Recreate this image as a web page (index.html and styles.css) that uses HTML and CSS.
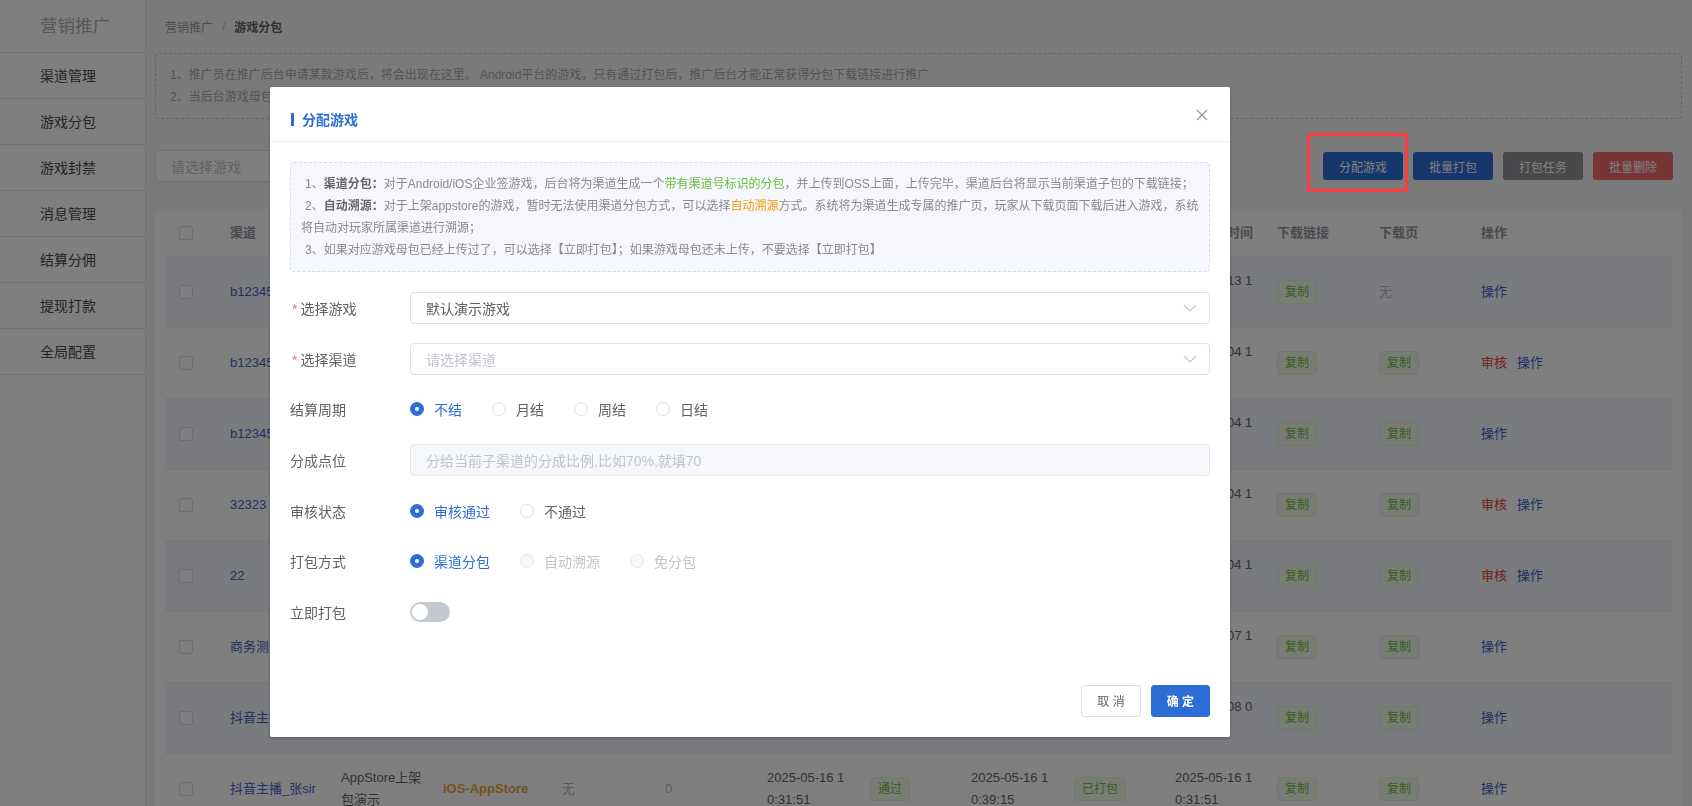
FILE: index.html
```html
<!DOCTYPE html>
<html lang="zh-CN">
<head>
    <meta charset="UTF-8">
    <meta name="viewport" content="width=device-width, initial-scale=1.0">
    <title>游戏分包 - 营销推广</title>
    <link rel="stylesheet" href="styles.css">
</head>
<body>
    <div class="layout">
        <!-- 左侧菜单 -->
        <aside class="sidebar">
            <div class="side-title">营销推广</div>
            <ul class="side-menu">
                <li>渠道管理</li>
                <li>游戏分包</li>
                <li>游戏封禁</li>
                <li>消息管理</li>
                <li>结算分佣</li>
                <li>提现打款</li>
                <li>全局配置</li>
            </ul>
        </aside>

        <main class="content">
            <div class="breadcrumb">
                <span class="crumb">营销推广</span>
                <span class="crumb-sep">/</span>
                <span class="crumb current">游戏分包</span>
            </div>

            <div class="notice">
                <p>1、推广员在推广后台申请某款游戏后，将会出现在这里。 Android平台的游戏，只有通过打包后，推广后台才能正常获得分包下载链接进行推广</p>
                <p>2、当后台游戏母包更新后，需要重新打包，渠道后台才能获取到最新的分包</p>
            </div>

            <div class="toolbar">
                <div class="select game-select">
                    <span class="placeholder">请选择游戏</span>
                </div>
                <div class="actions">
                    <button class="btn btn-primary btn-assign">分配游戏</button>
                    <button class="btn btn-primary">批量打包</button>
                    <button class="btn btn-info">打包任务</button>
                    <button class="btn btn-danger">批量删除</button>
                </div>
            </div>

            <div class="table-card">
                <div class="tr thead">
                    <div class="td td-check"><span class="checkbox"></span></div>
                    <div class="td">渠道</div>
                    <div class="td">游戏</div>
                    <div class="td">平台</div>
                    <div class="td">母包</div>
                    <div class="td">分成</div>
                    <div class="td">申请时间</div>
                    <div class="td">审核</div>
                    <div class="td">审核时间</div>
                    <div class="td">打包状态</div>
                    <div class="td">打包完成时间</div>
                    <div class="td">下载链接</div>
                    <div class="td">下载页</div>
                    <div class="td">操作</div>
                </div>

                <div class="tr striped">
                    <div class="td td-check"><span class="checkbox"></span></div>
                    <div class="td link">b123456</div>
                    <div class="td">默认演示游戏</div>
                    <div class="td platform">Android</div>
                    <div class="td muted">无</div>
                    <div class="td muted">0</div>
                    <div class="td">2025-05-13 14:02:11</div>
                    <div class="td"><span class="tag">通过</span></div>
                    <div class="td">2025-05-13 14:05:27</div>
                    <div class="td"><span class="tag">已打包</span></div>
                    <div class="td">2025-05-13 14:08:40</div>
                    <div class="td"><span class="tag">复制</span></div>
                    <div class="td muted">无</div>
                    <div class="td"><span class="op">操作</span></div>
                </div>

                <div class="tr">
                    <div class="td td-check"><span class="checkbox"></span></div>
                    <div class="td link">b123457</div>
                    <div class="td">默认演示游戏</div>
                    <div class="td platform">Android</div>
                    <div class="td muted">无</div>
                    <div class="td muted">0</div>
                    <div class="td">2025-05-04 11:20:05</div>
                    <div class="td"><span class="tag">通过</span></div>
                    <div class="td">2025-05-04 11:22:18</div>
                    <div class="td"><span class="tag">已打包</span></div>
                    <div class="td">2025-05-04 11:25:33</div>
                    <div class="td"><span class="tag">复制</span></div>
                    <div class="td"><span class="tag">复制</span></div>
                    <div class="td"><span class="audit">审核</span><span class="op">操作</span></div>
                </div>

                <div class="tr striped">
                    <div class="td td-check"><span class="checkbox"></span></div>
                    <div class="td link">b123458</div>
                    <div class="td">默认演示游戏</div>
                    <div class="td platform">Android</div>
                    <div class="td muted">无</div>
                    <div class="td muted">0</div>
                    <div class="td">2025-05-04 10:41:52</div>
                    <div class="td"><span class="tag">通过</span></div>
                    <div class="td">2025-05-04 10:45:09</div>
                    <div class="td"><span class="tag">已打包</span></div>
                    <div class="td">2025-05-04 10:47:16</div>
                    <div class="td"><span class="tag">复制</span></div>
                    <div class="td"><span class="tag">复制</span></div>
                    <div class="td"><span class="op">操作</span></div>
                </div>

                <div class="tr">
                    <div class="td td-check"><span class="checkbox"></span></div>
                    <div class="td link">32323</div>
                    <div class="td">默认演示游戏</div>
                    <div class="td platform">Android</div>
                    <div class="td muted">无</div>
                    <div class="td muted">0</div>
                    <div class="td">2025-05-04 10:12:30</div>
                    <div class="td"><span class="tag">通过</span></div>
                    <div class="td">2025-05-04 10:15:02</div>
                    <div class="td"><span class="tag">已打包</span></div>
                    <div class="td">2025-05-04 10:18:44</div>
                    <div class="td"><span class="tag">复制</span></div>
                    <div class="td"><span class="tag">复制</span></div>
                    <div class="td"><span class="audit">审核</span><span class="op">操作</span></div>
                </div>

                <div class="tr striped">
                    <div class="td td-check"><span class="checkbox"></span></div>
                    <div class="td link">22</div>
                    <div class="td">默认演示游戏</div>
                    <div class="td platform">Android</div>
                    <div class="td muted">无</div>
                    <div class="td muted">0</div>
                    <div class="td">2025-05-04 09:55:21</div>
                    <div class="td"><span class="tag">通过</span></div>
                    <div class="td">2025-05-04 09:58:10</div>
                    <div class="td"><span class="tag">已打包</span></div>
                    <div class="td">2025-05-04 10:01:37</div>
                    <div class="td"><span class="tag">复制</span></div>
                    <div class="td"><span class="tag">复制</span></div>
                    <div class="td"><span class="audit">审核</span><span class="op">操作</span></div>
                </div>

                <div class="tr">
                    <div class="td td-check"><span class="checkbox"></span></div>
                    <div class="td link">商务测试</div>
                    <div class="td">默认演示游戏</div>
                    <div class="td platform">Android</div>
                    <div class="td muted">无</div>
                    <div class="td muted">0</div>
                    <div class="td">2025-05-07 15:30:48</div>
                    <div class="td"><span class="tag">通过</span></div>
                    <div class="td">2025-05-07 15:33:12</div>
                    <div class="td"><span class="tag">已打包</span></div>
                    <div class="td">2025-05-07 15:36:59</div>
                    <div class="td"><span class="tag">复制</span></div>
                    <div class="td"><span class="tag">复制</span></div>
                    <div class="td"><span class="op">操作</span></div>
                </div>

                <div class="tr striped">
                    <div class="td td-check"><span class="checkbox"></span></div>
                    <div class="td link">抖音主播_李sir</div>
                    <div class="td">默认演示游戏</div>
                    <div class="td platform">Android</div>
                    <div class="td muted">无</div>
                    <div class="td muted">0</div>
                    <div class="td">2025-05-08 09:12:03</div>
                    <div class="td"><span class="tag">通过</span></div>
                    <div class="td">2025-05-08 09:15:26</div>
                    <div class="td"><span class="tag">已打包</span></div>
                    <div class="td">2025-05-08 09:18:41</div>
                    <div class="td"><span class="tag">复制</span></div>
                    <div class="td"><span class="tag">复制</span></div>
                    <div class="td"><span class="op">操作</span></div>
                </div>

                <div class="tr">
                    <div class="td td-check"><span class="checkbox"></span></div>
                    <div class="td link">抖音主播_张sir</div>
                    <div class="td">AppStore上架包演示</div>
                    <div class="td platform">iOS-AppStore</div>
                    <div class="td muted">无</div>
                    <div class="td muted">0</div>
                    <div class="td">2025-05-16 10:31:51</div>
                    <div class="td"><span class="tag">通过</span></div>
                    <div class="td">2025-05-16 10:39:15</div>
                    <div class="td"><span class="tag">已打包</span></div>
                    <div class="td">2025-05-16 10:31:51</div>
                    <div class="td"><span class="tag">复制</span></div>
                    <div class="td"><span class="tag">复制</span></div>
                    <div class="td"><span class="op">操作</span></div>
                </div>
            </div>
        </main>
    </div>

    <!-- 分配游戏弹窗 -->
    <div class="mask"></div>
    <div class="dialog-wrap">
        <div class="dialog">
            <div class="dialog-header">
                <span class="dialog-title">分配游戏</span>
                <span class="dialog-close">
                    <svg width="12" height="12" viewBox="0 0 12 12"><path d="M1 1L11 11M11 1L1 11" stroke="#909399" stroke-width="1.2" fill="none"/></svg>
                </span>
            </div>

            <div class="dialog-body">
                <div class="tips">
                    <p>1、<b>渠道分包：</b>对于Android/iOS企业签游戏，后台将为渠道生成一个<span class="green">带有渠道号标识的分包</span>，并上传到OSS上面，上传完毕，渠道后台将显示当前渠道子包的下载链接；</p>
                    <p>2、<b>自动溯源：</b>对于上架appstore的游戏，暂时无法使用渠道分包方式，可以选择<span class="orange">自动溯源</span>方式。系统将为渠道生成专属的推广页，玩家从下载页面下载后进入游戏，系统<br>将自动对玩家所属渠道进行溯源；</p>
                    <p>3、如果对应游戏母包已经上传过了，可以选择【立即打包】；如果游戏母包还未上传，不要选择【立即打包】</p>
                </div>

                <div class="form">
                    <div class="form-item">
                        <label class="form-label"><i class="req">*</i>选择游戏</label>
                        <div class="select">
                            <span class="value">默认演示游戏</span>
                            <svg class="arrow" width="14" height="8" viewBox="0 0 14 8"><path d="M1 1L7 7L13 1" stroke="#c0c4cc" stroke-width="1.2" fill="none"/></svg>
                        </div>
                    </div>

                    <div class="form-item">
                        <label class="form-label"><i class="req">*</i>选择渠道</label>
                        <div class="select">
                            <span class="placeholder">请选择渠道</span>
                            <svg class="arrow" width="14" height="8" viewBox="0 0 14 8"><path d="M1 1L7 7L13 1" stroke="#c0c4cc" stroke-width="1.2" fill="none"/></svg>
                        </div>
                    </div>

                    <div class="form-item">
                        <label class="form-label">结算周期</label>
                        <div class="radio-group">
                            <span class="radio checked"><i class="dot"></i>不结</span>
                            <span class="radio"><i class="dot"></i>月结</span>
                            <span class="radio"><i class="dot"></i>周结</span>
                            <span class="radio"><i class="dot"></i>日结</span>
                        </div>
                    </div>

                    <div class="form-item">
                        <label class="form-label">分成点位</label>
                        <div class="input disabled">
                            <span class="placeholder">分给当前子渠道的分成比例,比如70%,就填70</span>
                        </div>
                    </div>

                    <div class="form-item">
                        <label class="form-label">审核状态</label>
                        <div class="radio-group">
                            <span class="radio checked"><i class="dot"></i>审核通过</span>
                            <span class="radio"><i class="dot"></i>不通过</span>
                        </div>
                    </div>

                    <div class="form-item">
                        <label class="form-label">打包方式</label>
                        <div class="radio-group">
                            <span class="radio checked"><i class="dot"></i>渠道分包</span>
                            <span class="radio disabled"><i class="dot"></i>自动溯源</span>
                            <span class="radio disabled"><i class="dot"></i>免分包</span>
                        </div>
                    </div>

                    <div class="form-item">
                        <label class="form-label">立即打包</label>
                        <span class="switch"><i class="knob"></i></span>
                    </div>
                </div>
            </div>

            <div class="dialog-footer">
                <button class="btn-plain">取 消</button>
                <button class="btn-ok">确 定</button>
            </div>
        </div>
    </div>
</body>
</html>
```

FILE: styles.css
```css
* {
    margin: 0;
    padding: 0;
    box-sizing: border-box;
}

body {
    font-family: "Liberation Sans", "Noto Sans CJK SC", sans-serif;
    font-size: 14px;
    color: #606266;
    background: #f5f5f5;
    height: 100vh;
    overflow: hidden;
}

ul {
    list-style: none;
}

button {
    font-family: inherit;
    border: none;
    cursor: pointer;
}

.layout {
    display: flex;
    height: 100%;
}

/* 左侧菜单 */
.sidebar {
    width: 146px;
    flex-shrink: 0;
    background: #fff;
    border-right: 1px solid #e4e4e4;
}

.side-title {
    height: 53px;
    line-height: 52px;
    padding-left: 40px;
    font-size: 17.5px;
    color: #b0b0b0;
    border-bottom: 1px solid #e4e4e4;
}

.side-menu li {
    height: 46px;
    line-height: 46px;
    padding-left: 40px;
    color: #4a4a4a;
    border-bottom: 1px solid #e4e4e4;
}

/* 右侧内容 */
.content {
    flex: 1;
    padding: 0 10px 0 9px;
    min-width: 0;
}

.breadcrumb {
    height: 53px;
    display: flex;
    align-items: center;
    padding-left: 10px;
    font-size: 12px;
    color: #999;
}

.crumb-sep {
    margin: 0 9px;
    color: #c0c4cc;
}

.crumb.current {
    color: #606266;
    font-weight: bold;
}

.notice {
    border: 1px dashed #c8c8c8;
    border-radius: 4px;
    padding: 10px 14px;
    font-size: 12px;
    line-height: 22px;
    color: #a8a8a8;
}

.toolbar {
    margin-top: 31px;
    display: flex;
    justify-content: space-between;
    align-items: center;
    height: 32px;
}

.select {
    height: 32px;
    border: 1px solid #dcdfe6;
    border-radius: 4px;
    background: #fff;
    padding: 0 12px 0 15px;
    display: flex;
    align-items: center;
    justify-content: space-between;
}

.game-select {
    width: 240px;
}

.placeholder {
    color: #c0c4cc;
}

.actions {
    display: flex;
    gap: 10px;
    margin-right: 9px;
}

.btn {
    width: 80px;
    height: 28px;
    border-radius: 3px;
    font-size: 12px;
    color: #fff;
}

.btn-primary {
    background: #2d6ed6;
}

.btn-info {
    background: #939399;
}

.btn-danger {
    background: #f06a6a;
}

/* 标注框 */
.btn-assign {
    position: relative;
}

.btn-assign::after {
    content: '';
    position: absolute;
    top: -19px;
    left: -16px;
    right: -5px;
    bottom: -12px;
    border: 3px solid #ff3b3b;
    border-radius: 2px;
    z-index: 2100;
}

/* 表格 */
.table-card {
    margin-top: 27px;
    background: #fff;
    border-radius: 4px;
    padding: 0 10px;
    font-size: 13px;
}

.tr {
    display: grid;
    grid-template-columns: 55px 111px 102px 119px 103px 102px 103px 101px 103px 101px 102px 102px 102px 1fr;
    height: 71px;
    border-bottom: 1px solid #ebeef5;
}

.tr.thead {
    height: 48px;
    font-weight: bold;
    color: #909399;
}

.tr.striped {
    background: #f4f6fc;
}

.td {
    padding: 0 10px;
    display: flex;
    align-items: center;
    line-height: 22px;
    word-break: break-all;
}

.td-check {
    padding-left: 14px;
}

.checkbox {
    width: 14px;
    height: 14px;
    border: 1px solid #dcdfe6;
    border-radius: 2px;
    background: #fff;
}

.link {
    color: #3f5fc8;
}

.platform {
    color: #e6a23c;
    font-weight: bold;
}

.muted {
    color: #b4b7bd;
}

.tag {
    display: inline-block;
    height: 24px;
    line-height: 22px;
    padding: 0 7px;
    font-size: 12px;
    color: #67c23a;
    background: #f0f9eb;
    border: 1px solid #e1f3d8;
    border-radius: 4px;
}

.audit {
    color: #e04848;
    margin-right: 10px;
}

.op {
    color: #3f5fc8;
}

/* 弹窗 */
.mask {
    position: fixed;
    inset: 0;
    background: rgba(0, 0, 0, 0.5);
    z-index: 2000;
}

.dialog-wrap {
    position: fixed;
    inset: 0;
    z-index: 2001;
    padding: 87px 0 0 270px;
}

.dialog {
    position: relative;
    width: 960px;
    background: #fff;
    border-radius: 2px;
    box-shadow: 0 1px 3px rgba(0, 0, 0, 0.3);
}

.dialog-header {
    height: 55px;
    padding: 22px 20px 0;
    border-bottom: 1px solid #ebeef5;
    display: flex;
    align-items: flex-start;
}

.dialog-title {
    display: flex;
    align-items: center;
    height: 20px;
    font-size: 14px;
    font-weight: bold;
    color: #2d6ed6;
}

.dialog-title::before {
    content: '';
    width: 3px;
    height: 13px;
    background: #2d6ed6;
    margin: 0 8px 0 1px;
}

.dialog-close {
    position: absolute;
    top: 22px;
    right: 22px;
    width: 12px;
    height: 12px;
    display: flex;
}

.dialog-body {
    padding: 20px 20px 28px;
}

.tips {
    background: #f6f7fc;
    border: 1px dashed #d6ddef;
    border-radius: 4px;
    padding: 10px 10px;
    font-size: 12px;
    line-height: 22px;
    color: #8a8a8a;
}

.tips p {
    text-indent: 4px;
}

.tips b {
    color: #666;
}

.green {
    color: #67c23a;
}

.orange {
    color: #f7960f;
}

.form {
    margin-top: 20px;
}

.form-item {
    display: flex;
    align-items: center;
    height: 32px;
    margin-bottom: 18.67px;
}

.form-label {
    width: 120px;
    flex-shrink: 0;
    color: #606266;
}

.req {
    font-style: normal;
    color: #f56c6c;
    margin: 0 3px 0 2px;
}

.form-item .select,
.input {
    flex: 1;
}

.input {
    height: 32px;
    border: 1px solid #dcdfe6;
    border-radius: 4px;
    padding: 0 15px;
    display: flex;
    align-items: center;
}

.input.disabled {
    background: #f5f7fa;
    border-color: #e4e7ed;
}

.radio-group {
    display: flex;
}

.radio {
    display: inline-flex;
    align-items: center;
    margin-right: 30px;
    color: #606266;
}

.radio .dot {
    width: 14px;
    height: 14px;
    border: 1px solid #dcdfe6;
    border-radius: 50%;
    background: #fff;
    margin-right: 10px;
    display: flex;
    align-items: center;
    justify-content: center;
}

.radio.checked {
    color: #2d6ed6;
}

.radio.checked .dot {
    background: #2d6ed6;
    border-color: #2d6ed6;
}

.radio.checked .dot::after {
    content: '';
    width: 4px;
    height: 4px;
    border-radius: 50%;
    background: #fff;
}

.radio.disabled {
    color: #c0c4cc;
}

.radio.disabled .dot {
    background: #f5f7fa;
    border-color: #e4e7ed;
}

.switch {
    width: 40px;
    height: 20px;
    border-radius: 10px;
    background: #c4c8cf;
    padding: 2px;
    display: flex;
}

.switch .knob {
    width: 16px;
    height: 16px;
    border-radius: 50%;
    background: #fff;
}

.dialog-footer {
    padding: 10px 20px 20px;
    display: flex;
    justify-content: flex-end;
    gap: 10px;
}

.btn-plain,
.btn-ok {
    height: 32px;
    padding: 0 15px;
    font-size: 12px;
    border-radius: 3px;
}

.btn-plain {
    background: #fff;
    border: 1px solid #dcdfe6;
    color: #606266;
}

.btn-ok {
    background: #2d6ed6;
    border: 1px solid #2d6ed6;
    color: #fff;
    font-weight: bold;
}
```
